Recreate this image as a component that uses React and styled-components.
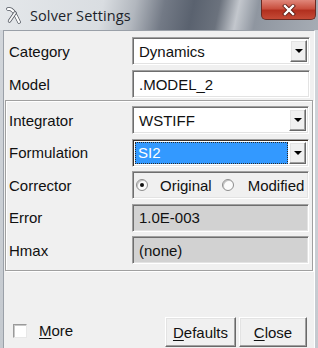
import React from 'react';
import styled, { createGlobalStyle } from 'styled-components';

const Global = createGlobalStyle`
  html, body { margin: 0; padding: 0; }
  body {
    width: 318px; height: 348px; overflow: hidden;
    background: #c9cdd3;
    font-family: "Liberation Sans", Arial, sans-serif;
  }
`;

const Window = styled.div`
  width: 318px; height: 348px;
  display: flex; flex-direction: column;
  background: linear-gradient(180deg, #d3d7dc 0%, #c4c9cf 100%);
`;

const TitleBar = styled.div`
  height: 30px; flex: none; position: relative;
  display: flex; align-items: center; gap: 8px;
  padding-left: 6px; box-sizing: border-box;
  background: linear-gradient(102deg, #e4e7ea 0%, #d9dde1 32%, #b2b7be 42%, #737a86 51%, #5a626f 60%, #6b727d 68%, #c3c7cd 74%, #8f96a0 80%, #a6acb4 100%);
`;

const Title = styled.span`
  font-family: "Open Sans", "Noto Sans", sans-serif;
  font-size: 14.5px; color: #1c1f2a; letter-spacing: 0.1px;
`;

const CloseButton = styled.div`
  position: absolute; top: 0; right: 2px;
  width: 55px; height: 20px; box-sizing: border-box;
  border: 1px solid #6b2a22; border-top: none;
  border-radius: 0 0 5px 5px;
  background: linear-gradient(180deg, #e0877a 0%, #c9503f 45%, #b2301f 55%, #c44a36 100%);
  display: flex; align-items: center; justify-content: center;
`;

const Client = styled.div`
  flex: 1; margin: 0 3px;
  background: #f0f0f0;
  border-top: 1px solid #9aa0a8;
  border-left: 1px solid #9aa0a8;
  border-right: 1px solid #ffffff;
  display: flex; flex-direction: column;
`;

const TopSection = styled.div`
  display: grid; grid-template-columns: 123px 1fr;
  row-gap: 5px; align-items: center;
  padding: 6px 4px 2px 5px;
`;

const Panel = styled.div`
  display: grid; grid-template-columns: 123px 1fr;
  row-gap: 4.5px; align-items: center;
  margin: 0 1px 0 1px;
  padding: 5px 3px 6px 3px;
  border: 1px solid #a0a0a0;
  box-shadow: inset 1px 1px #ffffff, 1px 1px #ffffff;
`;

const Label = styled.span`
  font-size: 15px; color: #111;
`;

const Field = styled.div`
  height: 28px; box-sizing: border-box;
  display: flex; align-items: center;
  border: 1px solid; border-color: #a0a0a0 #ffffff #ffffff #a0a0a0;
  box-shadow: inset 1px 1px ${p => (p.$focus ? '#3a3028' : '#6e6e6e')}, inset -1px -1px #e3e3e3;
  background: ${p => (p.$disabled ? '#d2d2d2' : p.$plain ? '#f0f0f0' : '#ffffff')};
  padding: 2px 2px 2px 2px;
  font-size: 15px; color: #111;
`;

const FieldText = styled.span`
  flex: 1; padding-left: 4px;
`;

const Selection = styled.span`
  flex: 1; align-self: stretch;
  display: flex; align-items: center;
  margin: 0 1px 0 0;
  padding-left: 3px;
  background: #3399ff; color: #ffffff;
  outline: 1px dotted #2a2a2a; outline-offset: -1px;
`;

const DropButton = styled.span`
  width: 17px; align-self: stretch; margin-left: auto;
  box-sizing: border-box;
  background: #f0f0f0;
  border: 1px solid; border-color: #ffffff #696969 #696969 #ffffff;
  box-shadow: inset -1px -1px #a0a0a0, inset 1px 1px #e3e3e3;
  display: flex; align-items: center; justify-content: center;
`;

const Arrow = styled.span`
  width: 0; height: 0;
  border-left: 4px solid transparent; border-right: 4px solid transparent;
  border-top: 4px solid #000;
`;

const RadioItem = styled.label`
  display: flex; align-items: center; gap: ${p => p.$gap}px;
  margin-left: ${p => p.$offset}px;
  font-size: 15px; color: #111;
`;

const RadioCircle = styled.span`
  width: 12px; height: 12px; box-sizing: border-box; border-radius: 50%;
  border: 1px solid #8d8d8d;
  box-shadow: inset 1px 1px #c4c4c4;
  background: #fbfbfb;
  display: flex; align-items: center; justify-content: center;
  &::after {
    content: ''; width: 4px; height: 4px; border-radius: 50%;
    background: ${p => (p.$checked ? '#111' : 'transparent')};
  }
`;

const Footer = styled.div`
  flex: 1; display: flex; align-items: flex-end;
  padding: 0 7px 1px 5px;
`;

const CheckRow = styled.label`
  display: flex; align-items: center; gap: 12px;
  margin-bottom: 8px; margin-left: 4px;
  font-size: 15px; color: #111;
`;

const CheckBox = styled.span`
  width: 14px; height: 14px; box-sizing: border-box;
  border: 1px solid; border-color: #9a9a9a #e8e8e8 #e8e8e8 #9a9a9a;
  box-shadow: inset 1px 1px #c8c8c8;
  background: #ffffff;
`;

const Buttons = styled.div`
  margin-left: auto; display: flex; gap: 3px;
`;

const Button = styled.button`
  width: ${p => p.$w}px; height: 30px;
  box-sizing: border-box;
  font-family: "Liberation Sans", Arial, sans-serif;
  font-size: 15px; color: #111;
  background: #f0f0f0;
  border: 1px solid; border-color: #ffffff #696969 #696969 #ffffff;
  box-shadow: inset -1px -1px #a0a0a0, inset 1px 1px #e3e3e3;
  padding: 0;
`;

const U = styled.span`
  text-decoration: underline;
  text-underline-offset: 2px;
`;

function AppIcon() {
  return (
    <svg width="16" height="18" viewBox="0 0 16 18">
      <path d="M2 3 C7 2 9 8 13 16" stroke="#4f545d" strokeWidth="3.6" fill="none" strokeLinecap="round" />
      <path d="M2 3 C7 2 9 8 13 16" stroke="#ffffff" strokeWidth="2.2" fill="none" strokeLinecap="round" />
      <path d="M9 7 L3.5 15" stroke="#4f545d" strokeWidth="3.4" fill="none" strokeLinecap="round" />
      <path d="M9 7 L3.5 15" stroke="#f6f6f6" strokeWidth="2" fill="none" strokeLinecap="round" />
    </svg>
  );
}

function CloseGlyph() {
  return (
    <svg width="14" height="12" viewBox="0 0 14 12">
      <path d="M3 2 L11 10 M11 2 L3 10" stroke="#5a1a12" strokeWidth="4" strokeLinecap="square" />
      <path d="M3 2 L11 10 M11 2 L3 10" stroke="#ffffff" strokeWidth="2.4" strokeLinecap="square" />
    </svg>
  );
}

function Combo({ value, selected, focus }) {
  return (
    <Field $focus={focus}>
      {selected ? <Selection>{value}</Selection> : <FieldText>{value}</FieldText>}
      <DropButton><Arrow /></DropButton>
    </Field>
  );
}

export default function App() {
  return (
    <>
      <Global />
      <Window>
        <TitleBar>
          <AppIcon />
          <Title>Solver Settings</Title>
          <CloseButton><CloseGlyph /></CloseButton>
        </TitleBar>
        <Client>
          <TopSection>
            <Label>Category</Label>
            <Combo value="Dynamics" />
            <Label>Model</Label>
            <Field><FieldText>.MODEL_2</FieldText></Field>
          </TopSection>
          <Panel>
            <Label>Integrator</Label>
            <Combo value="WSTIFF" />
            <Label>Formulation</Label>
            <Combo value="SI2" selected focus />
            <Label>Corrector</Label>
            <Field $plain>
              <RadioItem $gap={12} $offset={1}><RadioCircle $checked />Original</RadioItem>
              <RadioItem $gap={14} $offset={10}><RadioCircle />Modified</RadioItem>
            </Field>
            <Label>Error</Label>
            <Field $disabled><FieldText>1.0E-003</FieldText></Field>
            <Label>Hmax</Label>
            <Field $disabled><FieldText>(none)</FieldText></Field>
          </Panel>
          <Footer>
            <CheckRow><CheckBox /><span><U>M</U>ore</span></CheckRow>
            <Buttons>
              <Button $w={71}><U>D</U>efaults</Button>
              <Button $w={68}><U>C</U>lose</Button>
            </Buttons>
          </Footer>
        </Client>
      </Window>
    </>
  );
}
